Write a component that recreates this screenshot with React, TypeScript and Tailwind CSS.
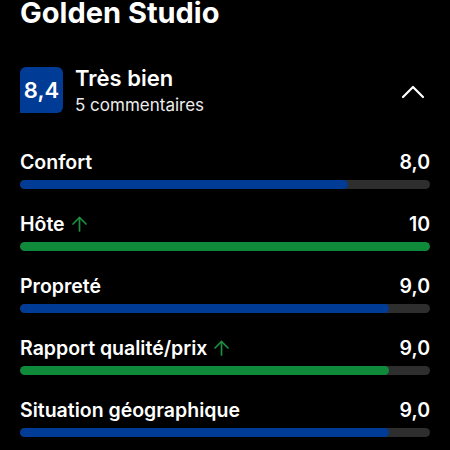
import React from "react";

type Row = { label: string; score: string; value: number; up?: boolean };

const rows: Row[] = [
  { label: "Confort", score: "8,0", value: 8 },
  { label: "Hôte", score: "10", value: 10, up: true },
  { label: "Propreté", score: "9,0", value: 9 },
  { label: "Rapport qualité/prix", score: "9,0", value: 9, up: true },
  { label: "Situation géographique", score: "9,0", value: 9 },
];

function ArrowUp() {
  return (
    <svg width="17" height="16" viewBox="0 0 17 16" fill="none" stroke="#1d8f3e" strokeWidth="1.7" strokeLinecap="round" strokeLinejoin="round">
      <path d="M8.5 15V1.5" />
      <path d="M2 8L8.5 1.5L15 8" />
    </svg>
  );
}

export default function App() {
  return (
    <div className="w-[450px] h-[450px] overflow-hidden bg-black text-white px-5" style={{ fontFamily: "Inter, 'Noto Sans', sans-serif" }}>
      <h1 className="text-[29px] font-bold leading-[29px] -mt-[2px]">Golden Studio</h1>

      <div className="flex items-start mt-[40px]">
        <div className="w-[43px] h-[46px] bg-[#003b95] rounded-t-[6px] rounded-br-[6px] flex items-center justify-center text-[22px] font-semibold">
          8,4
        </div>
        <div className="ml-3 flex-1 -mt-[2px]">
          <div className="text-[22px] font-semibold leading-[26px]">Très bien</div>
          <div className="mt-[3px] text-[17px] leading-[22px] text-[#ececec]">5 commentaires</div>
        </div>
        <svg width="24" height="14" viewBox="0 0 24 14" fill="none" stroke="white" strokeWidth="2.2" strokeLinecap="round" strokeLinejoin="round" className="mr-[5px] self-center">
          <path d="M2 12L12 2L22 12" />
        </svg>
      </div>

      <div className="mt-[34px] flex flex-col gap-[23px]">
        {rows.map((r) => (
          <div key={r.label}>
            <div className="flex items-center justify-between text-[19.5px] font-semibold leading-[24px]">
              <div className="flex items-center gap-[6px]">
                <span>{r.label}</span>
                {r.up && <ArrowUp />}
              </div>
              <span>{r.score}</span>
            </div>
            <div className="mt-[6px] h-[9px] rounded-full bg-[#2e2e2e] overflow-hidden">
              <div
                className={r.up ? "h-full rounded-full bg-[#0f8a3a]" : "h-full rounded-full bg-[#003b95]"}
                style={{ width: `${r.value * 10}%` }}
              />
            </div>
          </div>
        ))}
      </div>
    </div>
  );
}
